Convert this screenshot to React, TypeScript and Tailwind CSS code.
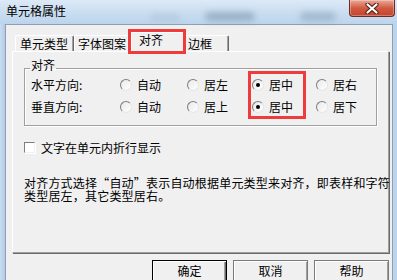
import React from "react";

const tabs = [
  { label: "单元类型", cls: "w-[59px] pl-[4px]", active: false },
  { label: "字体图案", cls: "w-[57px] pl-[3px]", active: false },
  { label: "对齐", cls: "w-[54px] pl-[7px]", active: true },
  { label: "边框", cls: "w-[44px] pl-[2px]", active: false },
];

function Radio({ label, checked }: { label: string; checked?: boolean }) {
  return (
    <div className="flex items-center gap-[5px]">
      <span className="w-[12px] h-[12px] rounded-full border border-[#e6e6e6] border-t-[#7d7d7d] border-l-[#7d7d7d] bg-gradient-to-br from-[#e9e9e9] to-white flex items-center justify-center">
        {checked && <span className="w-[4px] h-[4px] rounded-full bg-black" />}
      </span>
      <span className="leading-[12px]">{label}</span>
    </div>
  );
}

function Button({ label, primary }: { label: string; primary?: boolean }) {
  return (
    <div
      className={
        primary
          ? "w-[75px] h-[23px] border border-black bg-[#f0f0f0] shadow-[inset_1px_1px_0_#fff,inset_-1px_-1px_0_#696969,inset_-2px_-2px_0_#a0a0a0] flex justify-center pt-[4px] leading-[12px]"
          : "w-[75px] h-[23px] border border-[#7a7a7a] bg-[#f0f0f0] shadow-[inset_1px_1px_0_#fff,inset_-1px_-1px_0_#a0a0a0] flex justify-center pt-[4px] leading-[12px]"
      }
    >
      {label}
    </div>
  );
}

export default function App() {
  return (
    <div className="w-[397px] h-[280px] overflow-hidden flex flex-col bg-[#bcd4ec] font-['Noto_Sans_CJK_SC',sans-serif] text-[12px] text-black">
      {/* title bar */}
      <div className="relative h-[24px] flex items-start justify-between bg-gradient-to-b from-[#dde9f6] via-[#cadef1] to-[#bcd4ec]">
        <span className="absolute left-[205px] top-[12px] w-[50px] h-[9px] rounded-full bg-[#7f95ac] opacity-60 blur-[3px]" />
        <span className="absolute left-[300px] top-[12px] w-[36px] h-[9px] rounded-full bg-[#8298ae] opacity-50 blur-[3px]" />
        <span className="absolute left-[150px] top-[14px] w-[30px] h-[7px] rounded-full bg-[#9fb4c9] opacity-40 blur-[3px]" />
        <span className="relative pl-[6px] pt-[5px] leading-[12px]">单元格属性</span>
        <div className="relative mr-[2px] w-[46px] h-[17px] rounded-b-[4px] border border-t-0 border-[#6e2a20] bg-gradient-to-b from-[#e9a898] via-[#d25a41] to-[#c2432b] shadow-[inset_0_0_0_1px_rgba(255,255,255,0.3)] flex items-center justify-center">
          <svg width="14" height="11" viewBox="0 0 14 11">
            <path d="M2.5 1.5 L11.5 9.5 M11.5 1.5 L2.5 9.5" stroke="#4d1d15" strokeWidth="4.2" strokeLinecap="round" />
            <path d="M2.5 1.5 L11.5 9.5 M11.5 1.5 L2.5 9.5" stroke="#ffffff" strokeWidth="2.2" strokeLinecap="round" />
          </svg>
        </div>
      </div>

      <div className="flex flex-1 min-h-0">
        <div className="w-[5px] bg-gradient-to-r from-[#c9ddf1] to-[#b2cbe5]" />
        <div className="flex-1 bg-[#f0f0f0] border-l border-t border-[#8d9fb2]">
          <div className="ml-[6px] w-[377px] pt-[7px]">
            {/* tabs */}
            <div className="flex items-end h-[19px] pl-[3px]">
              {tabs.map((t) =>
                t.active ? (
                  <div
                    key={t.label}
                    className={`relative z-10 h-[20px] -mb-[1px] ${t.cls} bg-[#f0f0f0] border-t border-l border-r border-t-white border-l-white border-r-[#696969] rounded-t-[2px] leading-[13px]`}
                  >
                    {t.label}
                    <span className="absolute -left-[4px] -top-[4px] w-[58px] h-[25px] border-[3px] border-[#ee3b3b]" />
                  </div>
                ) : (
                  <div
                    key={t.label}
                    className={`h-[16px] ${t.cls} border-t border-l border-r border-t-white border-l-white border-r-[#696969] shadow-[inset_-1px_0_0_#a0a0a0] rounded-t-[2px] pt-[1px] leading-[13px]`}
                  >
                    {t.label}
                  </div>
                )
              )}
            </div>

            {/* pane */}
            <div className="h-[202px] border border-t-white border-l-white border-r-[#a0a0a0] border-b-[#a0a0a0] shadow-[1px_1px_0_#696969]">
              <fieldset className="ml-[11px] mt-[10px] w-[353px] border border-[#a0a0a0] shadow-[inset_1px_1px_0_#fff,1px_1px_0_#fff] pl-[6px] pb-[7px]">
                <legend className="-ml-[1px] px-[1px] leading-[12px]">
                  <span className="relative -top-[3px]">对齐</span>
                </legend>
                <div className="relative grid grid-cols-[89px_67px_65px_64px_auto]">
                  <div className="h-[22px] flex items-center leading-[12px]">水平方向:</div>
                  <div className="h-[22px] flex items-center"><Radio label="自动" /></div>
                  <div className="h-[22px] flex items-center"><Radio label="居左" /></div>
                  <div className="h-[22px] flex items-center"><Radio label="居中" checked /></div>
                  <div className="h-[22px] flex items-center"><Radio label="居右" /></div>
                  <div className="h-[22px] flex items-center leading-[12px]">垂直方向:</div>
                  <div className="h-[22px] flex items-center"><Radio label="自动" /></div>
                  <div className="h-[22px] flex items-center"><Radio label="居上" /></div>
                  <div className="h-[22px] flex items-center"><Radio label="居中" checked /></div>
                  <div className="h-[22px] flex items-center"><Radio label="居下" /></div>
                  <span className="absolute left-[217px] -top-[3px] w-[58px] h-[48px] border-[3px] border-[#ee3b3b]" />
                </div>
              </fieldset>

              <div className="ml-[11px] mt-[15px] h-[13px] flex items-center gap-[6px]">
                <span className="w-[11px] h-[11px] border border-[#f0f0f0] border-t-[#7d7d7d] border-l-[#7d7d7d] bg-white shadow-[1px_1px_0_#fff]" />
                <span className="leading-[12px]">文字在单元内折行显示</span>
              </div>

              <div className="ml-[11px] mt-[22px] leading-[13px] tracking-[0.2px]">
                <div className="whitespace-nowrap">对齐方式选择“自动”表示自动根据单元类型来对齐，即表样和字符</div>
                <div className="whitespace-nowrap">类型居左，其它类型居右。</div>
              </div>
            </div>

            {/* buttons */}
            <div className="mt-[7px] flex justify-end gap-[6px]">
              <Button label="确定" primary />
              <Button label="取消" />
              <Button label="帮助" />
            </div>
          </div>
        </div>
        <div className="w-[5px] bg-[#bcd4ec] border-l border-[#8d9fb2]" />
      </div>
    </div>
  );
}
